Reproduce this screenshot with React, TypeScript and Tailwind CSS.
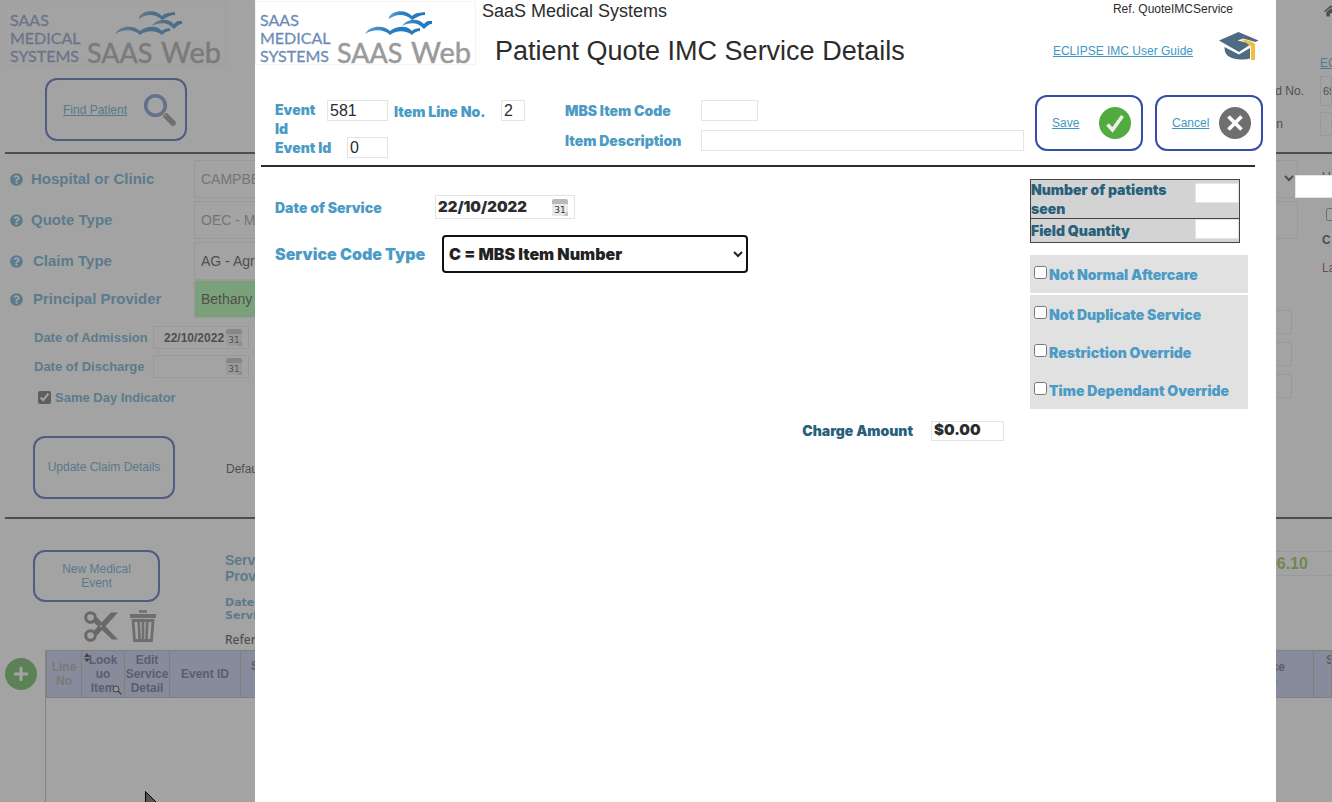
import React, { useId } from "react";
import { FaQuestionCircle, FaHome, FaPlus } from "react-icons/fa";

const HEAVY = "font-['Inter','Liberation_Sans',sans-serif] font-black";

function Logo() {
  return (
    <svg width="221" height="64" viewBox="0 0 221 64" className="block shrink-0" role="img" aria-label="SAAS Medical Systems, SAAS Web">
      <defs>
        <linearGradient id="gull" x1="0" x2="1" y1="0" y2="0">
          <stop offset="0" stopColor="#5fa0d6" />
          <stop offset="0.4" stopColor="#2b7fc0" />
          <stop offset="1" stopColor="#2277bd" />
        </linearGradient>
      </defs>
      <rect x="0.5" y="0.5" width="220" height="63" fill="none" stroke="#f4f4f4" />
      <g fontFamily="Lato, 'Liberation Sans', sans-serif" fill="#6f8bb5" stroke="#6f8bb5" strokeWidth="0.3" fontSize="16">
        <text x="5" y="25">SAAS</text>
        <text x="5" y="43">MEDICAL</text>
        <text x="5" y="61">SYSTEMS</text>
      </g>
      <g fontFamily="Lato, 'Liberation Sans', sans-serif" fill="#9a9a9a" stroke="#9a9a9a" strokeWidth="0.5">
        <text x="82" y="62" fontSize="27">SAAS</text>
        <text x="156" y="62" fontSize="29">Web</text>
      </g>
      <g fill="url(#gull)">
        <path d="M134 16 C138 9 151 8 157 15 C161 11 166 12 170 11 L170 14 C165 14 162 16 157 19 C151 13 142 12 134 18 Z" />
        <path d="M147 25 C151 18 163 16 169 23 C172 19 174 20 177 20 L177 23 C174 23 172 25 169 28 C163 21 155 21 147 25 Z" />
        <path d="M110 33 C115 24 129 24 135 30 C143 24 153 25 157 30 C160 27 162 28 165 27 L165 30 C162 30 160 31 157 34 C151 29 141 29 135 34 C129 28 118 28 110 33 Z" />
      </g>
    </svg>
  );
}

function CalendarIcon() {
  return (
    <svg width="16" height="17" viewBox="0 0 16 17" className="block shrink-0" aria-hidden="true">
      <path d="M0 3h16v9l-5 5H0z" fill="#e9e9e9" />
      <path d="M2 0h12a2 2 0 0 1 2 2v3H0V2a2 2 0 0 1 2-2z" fill="#b9b9b9" />
      <path d="M16 12v5h-5z" fill="#c4c4c4" />
      <text x="8" y="14" textAnchor="middle" fontSize="9" fontFamily="'DejaVu Sans', sans-serif" fill="#333">31</text>
    </svg>
  );
}

function MagnifierIcon() {
  return (
    <svg width="34" height="34" viewBox="0 0 34 34" aria-hidden="true">
      <circle cx="12.500" cy="12.500" r="9.800" fill="none" stroke="#5b86bf" strokeWidth="3.600" />
      <path d="M23 23l7 7" stroke="#7d7d7d" strokeWidth="5.600" strokeLinecap="round" />
      <path d="M20 20l3 3" stroke="#bbb" strokeWidth="2" />
    </svg>
  );
}

function ScissorsIcon() {
  return (
    <svg width="34" height="31" viewBox="0 0 34 31" aria-hidden="true">
      <g fill="none" stroke="#6c6c6c" strokeWidth="3">
        <circle cx="6.500" cy="6.500" r="4.800" />
        <circle cx="6.500" cy="24.500" r="4.800" />
      </g>
      <path d="M10 8.500l3-2L34 28.500h-6L10.500 12z" fill="#6c6c6c" />
      <path d="M10 22.500l3 2L34 1.500h-7L10.500 19z" fill="#6c6c6c" />
      <circle cx="17" cy="15" r="1" fill="#fff" />
    </svg>
  );
}

function TrashIcon() {
  return (
    <svg width="26" height="33" viewBox="0 0 26 33" fill="none" stroke="#7c7c7c" aria-hidden="true">
      <path d="M9 1.500h8" strokeWidth="2.500" />
      <path d="M0 6h26" strokeWidth="4" />
      <path d="M3 10.500L4.500 30.500h17L23 10.500z" strokeWidth="2.800" />
      <path d="M8.700 11l.8 18M13 11v18M17.300 11l-.8 18" strokeWidth="2.600" />
    </svg>
  );
}

function GraduationIcon() {
  return (
    <svg width="40" height="29" viewBox="0 0 40 29" aria-hidden="true">
      <path d="M0 8.500L19.500 0l20 8.500-3 1.500L24 6.500l-5.500 2 9 2 3 2.500L20 20z" fill="#4f6b84" />
      <path d="M5.500 15L20 22.500l11-6.500v10.500c-6 2-18 1.500-23-3.500-2-2.500-2.500-4.500-2.500-8z" fill="#4f6b84" />
      <path d="M21.500 7.500c6-.5 10 1.500 14.500 4V28h-4V14.500c-3-3-6.500-5-10.500-7z" fill="#efc03f" />
    </svg>
  );
}

function CheckBadge() {
  return (
    <svg width="32" height="32" viewBox="0 0 32 32" aria-hidden="true">
      <circle cx="16" cy="16" r="16" fill="#52ab3f" />
      <path d="M8.500 17.500l5 5.500L23.500 9" fill="none" stroke="#eee" strokeWidth="3.600" />
    </svg>
  );
}

function CrossBadge() {
  return (
    <svg width="32" height="32" viewBox="0 0 32 32" aria-hidden="true">
      <circle cx="16" cy="16" r="16" fill="#6f6f6f" />
      <path d="M9.500 9.500l13 13M22.500 9.500l-13 13" stroke="#fff" strokeWidth="3.800" />
    </svg>
  );
}

const boxButton = "flex shrink-0 items-center rounded-xl border-2 border-[#344da8] text-[12px] text-[#3f97c4]";
const bgField = "border border-[#e6e6e6] bg-white text-[#2c2c2c]";

function ClaimRow({ label, value, disabled, green, indent }: { label: string; value: string; disabled?: boolean; green?: boolean; indent?: boolean }) {
  const id = useId();
  return (
    <div className="flex items-center">
      <FaQuestionCircle size={13} className="mr-2 shrink-0 text-[#4b9bc5]" />
      <label htmlFor={id} className={`w-[163px] shrink-0 text-[15px] font-bold text-[#4b9bc5] ${indent ? "pl-0.5" : ""}`}>
        {label}
      </label>
      <input
        id={id}
        readOnly
        defaultValue={value}
        className={`h-[38px] min-w-0 flex-1 border border-[#e6e6e6] px-1.5 text-[14px] ${green ? "bg-[#98fb98]" : "bg-white"} ${disabled ? "text-[#8a8a8a]" : "text-[#2c2c2c]"}`}
      />
    </div>
  );
}

function SmallDate({ label, value }: { label: string; value: string }) {
  const id = useId();
  return (
    <div className="flex items-center">
      <label htmlFor={id} className="w-[119px] text-[13px] font-bold text-[#4b9bc5]">{label}</label>
      <span className={`flex h-[23px] w-24 items-center pr-1.5 ${bgField}`}>
        <input id={id} readOnly defaultValue={value} className="w-full min-w-0 bg-transparent pl-2.5 text-[12px] font-bold outline-none" />
        <CalendarIcon />
      </span>
    </div>
  );
}

function ClaimPage() {
  return (
    <div className="flex h-full flex-col pl-[5px]">
      <header className="flex h-[154px] shrink-0 justify-between border-b-2 border-[#2c2c2c]">
        <div className="pt-px">
          <Logo />
          <a href="#find" className={`${boxButton} mt-[13px] ml-10 h-[63px] w-[142px] justify-between pr-2 pl-4 underline`}>
            Find Patient
            <MagnifierIcon />
          </a>
        </div>
        <div className="flex w-40 flex-col items-end overflow-hidden text-[12px] whitespace-nowrap text-[#2c2c2c]">
          <div className="w-3 pt-1 pl-1"><FaHome size={14} /></div>
          <div className="mt-9 w-3"><a href="#guide" className="text-[#3f97c4] underline">ECLIPSE</a></div>
          <div className="mt-1 flex items-center gap-4">
            <label htmlFor="card">Card No.</label>
            <input id="card" readOnly defaultValue="69" className={`h-[30px] w-3 pl-0.5 text-[11px] ${bgField}`} />
          </div>
          <div className="mt-1.5 flex items-center gap-[37px]">
            <label htmlFor="person">Person</label>
            <input id="person" readOnly className={`h-6 w-3 ${bgField}`} />
          </div>
        </div>
      </header>

      <section className="flex h-[365px] shrink-0 border-b-2 border-[#2c2c2c]">
        <div className="flex min-w-0 flex-1 flex-col pt-1.5 pr-3.5 pl-[5px]">
          <div className="flex flex-col gap-[3px]">
            <div className="relative">
              <ClaimRow label="Hospital or Clinic" value="CAMPBELLTOWN" disabled />
              <svg width="10" height="7" viewBox="0 0 10 7" className="absolute top-[15px] right-1" fill="none" stroke="#2c2c2c" strokeWidth="2" aria-hidden="true">
                <path d="M1 1l4 4 4-4" />
              </svg>
            </div>
            <ClaimRow label="Quote Type" value="OEC - Medical" disabled />
            <div className="pr-12">
              <ClaimRow label="Claim Type" value="AG - Agreement" indent />
              <ClaimRow label="Principal Provider" value="Bethany" green indent />
            </div>
          </div>
          <div className="mt-2 flex justify-between pl-6">
            <div className="flex flex-col gap-1.5">
              <SmallDate label="Date of Admission" value="22/10/2022" />
              <SmallDate label="Date of Discharge" value="" />
              <label className="mt-1 flex items-center gap-1 pl-1 text-[13px] font-bold text-[#4b9bc5]">
                <input type="checkbox" defaultChecked className="size-[13px] accent-[#555]" />
                Same Day Indicator
              </label>
            </div>
            <div className="-mt-4 flex flex-col gap-2 pr-1.5">
              <input aria-label="Total fee" readOnly className={`h-6 w-24 ${bgField}`} />
              <input aria-label="Total benefit" readOnly className={`h-6 w-24 ${bgField}`} />
              <input aria-label="Total gap" readOnly className={`h-6 w-24 ${bgField}`} />
            </div>
          </div>
          <div className="mt-7 flex items-center pl-[23px]">
            <button type="button" className={`${boxButton} h-[63px] w-[142px] justify-center`}>Update Claim Details</button>
            <span className="mt-1 ml-[51px] text-[12px] text-[#2c2c2c]">Default</span>
          </div>
        </div>
        <aside className="flex w-5 flex-col overflow-hidden pt-3.5 text-[12px] whitespace-nowrap text-[#2c2c2c]">
          <span className="pl-2.5">U</span>
          <input type="checkbox" aria-label="Urgent" className="mt-[22px] ml-3.5 size-[13px] shrink-0" />
          <b className="mt-2.5 pl-2.5">C</b>
          <span className="mt-2.5 pl-2.5 text-[#7a2048]">La</span>
        </aside>
      </section>

      <section className="flex min-h-0 flex-1 flex-col">
        <div className="flex h-[131px] shrink-0 justify-between pl-7">
          <div className="flex">
            <div className="w-[192px] pt-[31px]">
              <button type="button" className={`${boxButton} h-[52px] w-[127px] justify-center leading-[14px]`}>
                New Medical
                <br />
                Event
              </button>
              <div className="mt-2 ml-[51px] flex items-center gap-3">
                <button type="button" aria-label="Cut"><ScissorsIcon /></button>
                <button type="button" aria-label="Delete"><TrashIcon /></button>
              </div>
            </div>
            <div className="pt-[33px] font-bold text-[#4b9bc5]">
              <p className="text-[14px] leading-4">Service<br />Provider</p>
              <p className="mt-3 font-['DejaVu_Sans',sans-serif] text-[11px] leading-[13px]">Date of<br />Service</p>
              <p className="mt-2.5 font-['Noto_Sans',sans-serif] text-[12px] leading-4 font-medium text-[#2c2c2c]">Referral</p>
            </div>
          </div>
          <div className="mt-8 flex h-[25px] w-[120px] items-center justify-end border-y border-[#e6e6e6] pr-6 text-[16px] font-bold text-[#7ebc2c]">$96.10</div>
        </div>
        <div className="flex min-h-0 flex-1">
          <button type="button" aria-label="Add line" className="mt-2 mr-2 flex size-8 shrink-0 items-center justify-center rounded-full bg-[#52ab3f] text-white">
            <FaPlus size={16} />
          </button>
          <div className="min-w-0 flex-1 border-l border-[#b0b0b0]">
            <table className="w-full table-fixed border-collapse text-[12px] leading-[14px] text-[#4c526e]">
              <colgroup>
                <col className="w-[35px]" />
                <col className="w-[43px]" />
                <col className="w-[45px]" />
                <col className="w-[71px]" />
                <col />
                <col className="w-[100px]" />
                <col className="w-[18px]" />
              </colgroup>
              <thead>
                <tr className="h-[47px] bg-[#b9c3ed] [&>th]:border [&>th]:border-[#a9a9a9] [&>th]:p-0">
                  <th className="text-[#9c9694]">Line<br />No</th>
                  <th className="relative">
                    <svg width="6" height="10" viewBox="0 0 6 10" className="absolute top-0.5 left-0.5" fill="#111" aria-hidden="true">
                      <path d="M3 0l3 4H0zM3 9L0 5.500h6z" />
                    </svg>
                    Look<br />uo<br />Item
                    <svg width="10" height="10" viewBox="0 0 10 10" className="absolute right-0.5 bottom-0.5" fill="none" stroke="#111" aria-hidden="true">
                      <circle cx="4" cy="4" r="3" fill="#ddd" />
                      <path d="M6 6l3.500 3.500" strokeWidth="1.300" />
                    </svg>
                  </th>
                  <th>Edit<br />Service<br />Detail</th>
                  <th>Event ID</th>
                  <th className="text-left align-top"><span className="block pt-2 pl-2.5">Service</span></th>
                  <th className="text-right"><span className="block pr-7">Service</span><span className="block pr-9">Code</span></th>
                  <th className="overflow-hidden align-top"><span className="block pt-0.5 pl-3 text-left">S</span></th>
                </tr>
              </thead>
            </table>
          </div>
        </div>
      </section>
    </div>
  );
}

const fieldBox = "border border-[#e4e4e4] bg-white text-[#2c2c2c] outline-none";
const heavyBlue = `${HEAVY} text-[#4b9bc5]`;

function DialogHeader() {
  return (
    <div className="flex items-start pt-px pr-[17px]">
      <Logo />
      <div className="min-w-0 flex-1 text-[#2c2c2c]">
        <p className="pl-1.5 text-[18px] leading-5">SaaS Medical Systems</p>
        <h1 className="mt-3 pl-[19px] text-[27px] leading-9">Patient Quote IMC Service Details</h1>
      </div>
      <div className="flex flex-col items-end">
        <p className="pr-[26px] text-[12px] leading-4 text-[#2c2c2c]">Ref. QuoteIMCService</p>
        <div className="mt-[15px] flex items-center gap-[26px]">
          <a href="#user-guide" className="pt-2 text-[12px] text-[#3f97c4] underline">ECLIPSE IMC User Guide</a>
          <GraduationIcon />
        </div>
      </div>
    </div>
  );
}

function EventBar() {
  return (
    <div className="flex pr-[13px] pl-5">
      <div className="w-[290px] shrink-0 pt-[5px] text-[14px] leading-[19px]">
        <div className="flex items-start">
          <label htmlFor="event" className={`mr-2 w-11 ${heavyBlue}`}>Event Id</label>
          <input id="event" defaultValue="581" className={`h-[21px] w-[61px] px-0.5 text-[16px] ${fieldBox}`} />
          <label htmlFor="line" className={`w-[113px] pt-0.5 pl-1.5 ${heavyBlue}`}>Item Line No.</label>
          <input id="line" defaultValue="2" className={`h-[21px] w-6 px-0.5 text-[16px] ${fieldBox}`} />
        </div>
        <div className="-mt-px flex items-center">
          <label htmlFor="event0" className={`w-[72px] ${heavyBlue}`}>Event Id</label>
          <input id="event0" defaultValue="0" className={`h-[21px] w-[41px] px-0.5 text-[16px] ${fieldBox}`} />
        </div>
      </div>
      <div className="flex min-w-0 flex-1 flex-col gap-[9px] pt-[5px] pr-[11px] text-[14px]">
        <div className="flex items-center">
          <label htmlFor="mbs" className={`w-[136px] shrink-0 ${heavyBlue}`}>MBS Item Code</label>
          <input id="mbs" className={`h-[21px] w-[57px] ${fieldBox}`} />
        </div>
        <div className="flex items-center">
          <label htmlFor="desc" className={`w-[136px] shrink-0 ${heavyBlue}`}>Item Description</label>
          <input id="desc" className={`h-[21px] min-w-0 flex-1 ${fieldBox}`} />
        </div>
      </div>
      <div className="flex shrink-0 gap-3">
        <a href="#save" className={`${boxButton} h-14 w-[108px] justify-between pr-2.5 pl-[15px] underline`}>
          Save
          <CheckBadge />
        </a>
        <a href="#cancel" className={`${boxButton} h-14 w-[108px] justify-between pr-2.5 pl-[15px] underline`}>
          Cancel
          <CrossBadge />
        </a>
      </div>
    </div>
  );
}

function ServiceForm() {
  return (
    <div className="flex min-w-0 flex-1 flex-col pt-7">
      <div className="flex items-center">
        <label htmlFor="dos" className={`w-40 text-[14px] ${heavyBlue}`}>Date of Service</label>
        <span className={`flex h-6 w-[140px] items-center pr-1.5 ${fieldBox}`}>
          <input id="dos" defaultValue="22/10/2022" className={`w-full min-w-0 bg-transparent pl-0.5 text-[15px] outline-none ${HEAVY}`} />
          <CalendarIcon />
        </span>
      </div>
      <div className="mt-4 flex items-center">
        <label htmlFor="code" className={`w-[167px] text-[16px] ${heavyBlue}`}>Service Code Type</label>
        <div className="relative">
          <select id="code" className={`h-[38px] w-[306px] appearance-none rounded border-2 border-[#111] bg-white px-[5px] text-[16px] text-[#222] ${HEAVY}`}>
            <option>C = MBS Item Number</option>
          </select>
          <svg width="10" height="7" viewBox="0 0 10 7" className="pointer-events-none absolute top-4 right-[5px]" fill="none" stroke="#222" strokeWidth="2" aria-hidden="true">
            <path d="M1 1l4 4 4-4" />
          </svg>
        </div>
      </div>
      <div className="mt-[147px] flex items-center justify-end pr-[26px]">
        <label htmlFor="charge" className={`mr-[18px] text-[14px] text-[#28607c] ${HEAVY}`}>Charge Amount</label>
        <input id="charge" defaultValue="$0.00" className={`h-5 w-[73px] px-0.5 text-[15px] ${fieldBox} ${HEAVY}`} />
      </div>
    </div>
  );
}

function Override({ label }: { label: string }) {
  return (
    <label className={`flex h-[38px] items-start bg-[#e1e1e1] pt-[11px] pl-1 text-[14px] leading-[18px] ${heavyBlue}`}>
      <input type="checkbox" className="mr-0.5 size-[13px] shrink-0" />
      {label}
    </label>
  );
}

function SidePanel() {
  return (
    <div className="w-[218px] shrink-0 pt-3 text-[14px]">
      <table className={`w-[210px] border-collapse bg-[#d3d3d3] leading-[19px] text-[#28607c] ${HEAVY}`}>
        <tbody>
          <tr className="h-[39px] border border-[#444]">
            <td className="p-0"><label htmlFor="patients" className="block pr-3">Number of patients seen</label></td>
            <td className="w-11 p-0 pt-[3px] align-top"><input id="patients" className="block h-5 w-11 border border-[#e4e4e4] bg-white" /></td>
          </tr>
          <tr className="h-6 border border-[#444]">
            <td className="p-0"><label htmlFor="quantity" className="block">Field Quantity</label></td>
            <td className="w-11 p-0 align-top"><input id="quantity" className="block h-5 w-11 border border-[#e4e4e4] bg-white" /></td>
          </tr>
        </tbody>
      </table>
      <div className="mt-3 flex flex-col">
        <Override label="Not Normal Aftercare" />
        <div className="mt-0.5">
          <Override label="Not Duplicate Service" />
          <Override label="Restriction Override" />
          <Override label="Time Dependant Override" />
        </div>
      </div>
    </div>
  );
}

export default function App() {
  return (
    <div className="relative h-screen overflow-hidden bg-white font-['Liberation_Sans',Arial,sans-serif]">
      <ClaimPage />
      <div className="absolute inset-0 bg-[#666]/60" />
      <div className="absolute top-[175px] right-0 h-[23px] w-[37px] border border-r-0 border-[#e4e4e4] bg-white" />
      <svg width="16" height="16" viewBox="0 0 16 16" className="absolute bottom-[-5px] left-[145px]" fill="#555" stroke="#000" aria-hidden="true">
        <path d="M0.500 0.500v15l4-4h7z" />
      </svg>
      <main role="dialog" aria-label="Patient Quote IMC Service Details" className="absolute inset-y-0 right-14 left-[255px] flex flex-col bg-white">
        <div className="h-[95px] shrink-0"><DialogHeader /></div>
        <div className="h-[70px] shrink-0"><EventBar /></div>
        <hr className="mr-[21px] ml-1.5 border-t-2 border-[#2c2c2c]" />
        <div className="flex pr-7 pl-5">
          <ServiceForm />
          <SidePanel />
        </div>
      </main>
    </div>
  );
}
